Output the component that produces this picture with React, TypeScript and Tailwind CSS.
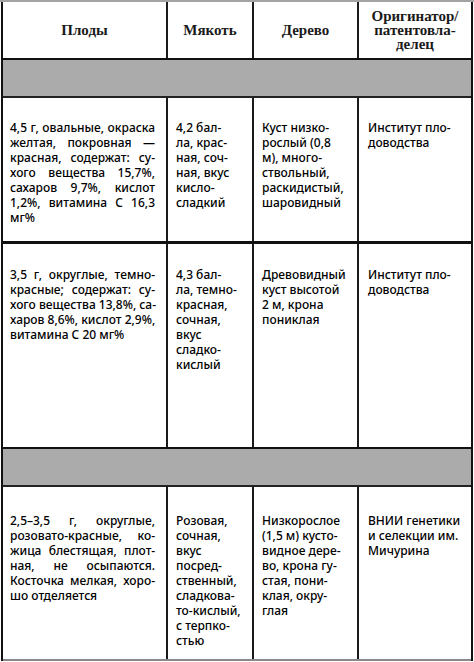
import React from "react";

type Row = { pt: string; h: string; border: string; cells: string[][] };

const rows: Row[] = [
  {
    pt: "pt-[22px]",
    h: "h-[146px]",
    border: "border-b-[3px]",
    cells: [
      [
        "4,5 г, овальные, окраска",
        "желтая, покровная —",
        "красная, содержат: су-",
        "хого вещества 15,7%,",
        "сахаров 9,7%, кислот",
        "1,2%, витамина С 16,3",
        "мг%",
      ],
      ["4,2 бал-", "ла, крас-", "ная, соч-", "ная, вкус", "кисло-", "сладкий"],
      ["Куст низко-", "рослый (0,8", "м), много-", "ствольный,", "раскидистый,", "шаровидный"],
      ["Институт пло-", "доводства"],
    ],
  },
  {
    pt: "pt-[23px]",
    h: "h-[205px]",
    border: "border-b-2",
    cells: [
      [
        "3,5 г, округлые, темно-",
        "красные; содержат: су-",
        "хого вещества 13,8%, са-",
        "харов 8,6%, кислот 2,9%,",
        "витамина С 20 мг%",
      ],
      ["4,3 бал-", "ла, темно-", "красная,", "сочная,", "вкус", "сладко-", "кислый"],
      ["Древовидный", "куст высотой", "2 м, крона", "пониклая"],
      ["Институт пло-", "доводства"],
    ],
  },
];

const lastRow: Row = {
  pt: "pt-[26px]",
  h: "h-[174px]",
  border: "border-b-2 border-b-[#8a8a8a]",
  cells: [
    [
      "2,5–3,5 г, округлые,",
      "розовато-красные, ко-",
      "жица блестящая, плот-",
      "ная, не осыпаются.",
      "Косточка мелкая, хоро-",
      "шо отделяется",
    ],
    ["Розовая,", "сочная,", "вкус", "посред-", "ственный,", "сладкова-", "то-кислый,", "с терпко-", "стью"],
    ["Низкорослое", "(1,5 м) кусто-", "видное дере-", "во, крона гу-", "стая, пони-", "клая, окру-", "глая"],
    ["ВНИИ генетики", "и селекции им.", "Мичурина"],
  ],
};

const colW = ["w-[165px] pl-[7px] pr-[11px]", "w-[86px] pl-2", "w-[105px] pl-2", "flex-1 pl-[9px]"];

function Cell({ lines, idx, pt }: { lines: string[]; idx: number; pt: string }) {
  const justify = idx === 0;
  return (
    <div className={`${colW[idx]} ${pt} ${idx < 3 ? "border-r-2 border-[#1a1a1a]" : ""} h-full`}>
      {lines.map((l, i) => (
        <div
          key={i}
          className={`whitespace-nowrap ${justify && i < lines.length - 1 ? "text-justify [text-align-last:justify]" : ""}`}
        >
          {l}
        </div>
      ))}
    </div>
  );
}

function DataRow({ row }: { row: Row }) {
  return (
    <div className={`flex ${row.h} ${row.border} border-[#111]`}>
      {row.cells.map((c, i) => (
        <Cell key={i} lines={c} idx={i} pt={row.pt} />
      ))}
    </div>
  );
}

function GrayRow() {
  return <div className="h-[38px] border-b-2 border-[#222] bg-[#ababab]" />;
}

export default function App() {
  const heads = [["Плоды"], ["Мякоть"], ["Дерево"], ["Оригинатор/", "патентовла-", "делец"]];
  return (
    <div className="h-[662px] w-[474px] overflow-hidden bg-white">
      <div className="h-[2px] bg-[#a3a3a3]" />
      <div
        className="mx-px border-x-2 border-[#111] text-[12px] font-medium leading-[15px] text-black"
        style={{ fontFamily: '"Noto Sans", "DejaVu Sans", sans-serif' }}
      >
        <div
          className="flex h-[58px] border-b-2 border-[#111] text-[15px] font-bold leading-[14px] text-[#1a1a1a]"
          style={{ fontFamily: '"Liberation Serif", serif' }}
        >
          {heads.map((h, i) => (
            <div
              key={i}
              className={`${["w-[165px]", "w-[86px]", "w-[105px]", "flex-1"][i]} flex flex-col items-center justify-center text-center ${i < 3 ? "border-r-2 border-[#1a1a1a]" : ""}`}
            >
              {h.map((l) => (
                <div key={l}>{l}</div>
              ))}
            </div>
          ))}
        </div>
        <GrayRow />
        {rows.map((r, i) => (
          <DataRow key={i} row={r} />
        ))}
        <GrayRow />
        <DataRow row={lastRow} />
      </div>
    </div>
  );
}
